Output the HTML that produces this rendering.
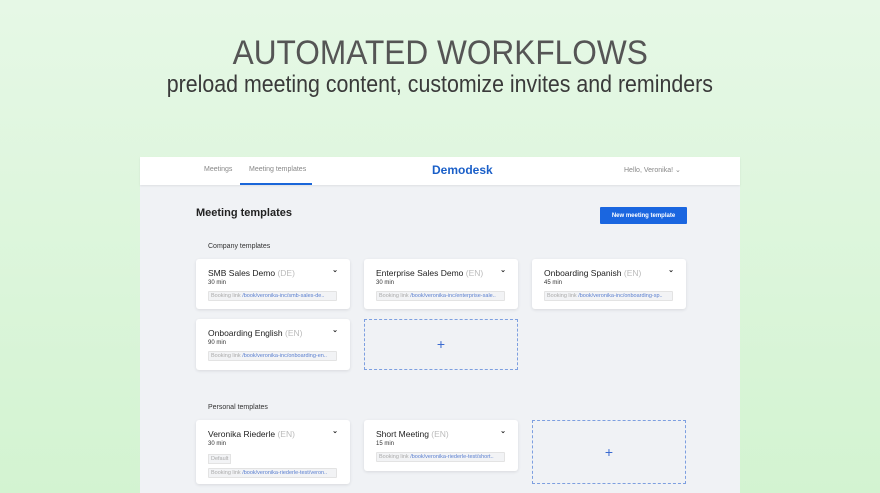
<!DOCTYPE html>
<html><head><meta charset="utf-8"><style>
*{margin:0;padding:0;box-sizing:border-box}
body{width:880px;height:493px;overflow:hidden;background:linear-gradient(#e6f8e6,#d3f3d1);font-family:"Liberation Sans",sans-serif;position:relative}
.t1{position:absolute;top:33px;left:0;width:880px;text-align:center;font-size:34px;color:#555;line-height:40px}
.t1 span,.t2 span{display:inline-block;transform-origin:center}
.t1 span{transform:scaleX(.93)}
.t2 span{transform:scaleX(.89)}
.t2{position:absolute;top:71px;left:0;width:880px;text-align:center;font-size:24px;color:#3a3a3a}
.app{position:absolute;left:140px;top:157px;width:600px;height:336px;background:#f0f2f5}
.nav{height:28px;background:#fff;box-shadow:0 1px 2px rgba(0,0,0,.08);position:relative;font-size:7px;color:#888}
.nav .a{position:absolute;top:9px}
.ul{position:absolute;left:100px;top:26px;width:72px;height:2px;background:#1a66d9}
.logo{position:absolute;left:292px;top:6px;font-size:12px;font-weight:bold;color:#1a5fc8}
h1{position:absolute;left:56px;top:50px;font-size:11px;font-weight:bold;color:#222}
.btn{position:absolute;left:460px;top:50px;width:87px;height:17px;background:#1a66e0;color:#fff;font-size:6px;font-weight:bold;display:flex;align-items:center;justify-content:center;border-radius:1px}
.lbl{position:absolute;font-size:7px;color:#333}
.card{position:absolute;width:154px;background:#fff;border-radius:3px;box-shadow:0 1px 3px rgba(0,0,0,.1);padding:9px 12px}
.card .n{font-size:8.5px;color:#222}
.card .n i{font-style:normal;color:#bbb}
.card .m{font-size:6px;color:#333;margin-top:2px}
.card .c{position:absolute;right:12px;top:7px;font-size:7px;color:#222;font-weight:bold}
.bl{margin-top:5px;background:#f2f3f5;border:1px solid #e3e3e3;font-size:5.5px;color:#aaa;padding:1px 2px;white-space:nowrap;overflow:hidden;width:129px;border-radius:1px}
.bl b{font-weight:normal;color:#5a7fd0}
.def{margin-top:5px;display:inline-block;background:#f2f3f5;border:1px solid #e3e3e3;font-size:5.5px;color:#aaa;padding:1px 2px}
.dash{position:absolute;width:154px;border:1px dashed #7d9fe0;text-align:center;color:#3a6ad0;font-size:14px;font-weight:300}
</style></head><body>
<div class="t1"><span>AUTOMATED WORKFLOWS</span></div>
<div class="t2"><span>preload meeting content, customize invites and reminders</span></div>
<div class="app">
<div class="nav"><span class="a" style="left:64px">Meetings</span><span class="a" style="left:109px">Meeting templates</span><div class="ul"></div>
<div class="logo">Demodesk</div><span class="a" style="left:484px">Hello, Veronika! ⌄</span></div>
<h1>Meeting templates</h1><div class="btn">New meeting template</div>
<div class="lbl" style="left:68px;top:86px">Company templates</div>
<div class="card" style="left:56px;top:102px;height:50px"><div class="n">SMB Sales Demo <i>(DE)</i></div><div class="c">⌄</div><div class="m">30 min</div><div class="bl">Booking link <b>/book/veronika-inc/smb-sales-de..</b></div></div>
<div class="card" style="left:224px;top:102px;height:50px"><div class="n">Enterprise Sales Demo <i>(EN)</i></div><div class="c">⌄</div><div class="m">30 min</div><div class="bl">Booking link <b>/book/veronika-inc/enterprise-sale..</b></div></div>
<div class="card" style="left:392px;top:102px;height:50px"><div class="n">Onboarding Spanish <i>(EN)</i></div><div class="c">⌄</div><div class="m">45 min</div><div class="bl">Booking link <b>/book/veronika-inc/onboarding-sp..</b></div></div>
<div class="card" style="left:56px;top:162px;height:51px"><div class="n">Onboarding English <i>(EN)</i></div><div class="c">⌄</div><div class="m">90 min</div><div class="bl">Booking link <b>/book/veronika-inc/onboarding-en..</b></div></div>
<div class="dash" style="left:224px;top:162px;height:51px;line-height:49px">+</div>
<div class="lbl" style="left:68px;top:247px">Personal templates</div>
<div class="card" style="left:56px;top:263px;height:64px"><div class="n">Veronika Riederle <i>(EN)</i></div><div class="c">⌄</div><div class="m">30 min</div><div class="def">Default</div><div class="bl" style="margin-top:3px">Booking link <b>/book/veronika-riederle-test/veron..</b></div></div>
<div class="card" style="left:224px;top:263px;height:51px"><div class="n">Short Meeting <i>(EN)</i></div><div class="c">⌄</div><div class="m">15 min</div><div class="bl">Booking link <b>/book/veronika-riederle-test/short..</b></div></div>
<div class="dash" style="left:392px;top:263px;height:64px;line-height:62px">+</div>
</div>
</body></html>
